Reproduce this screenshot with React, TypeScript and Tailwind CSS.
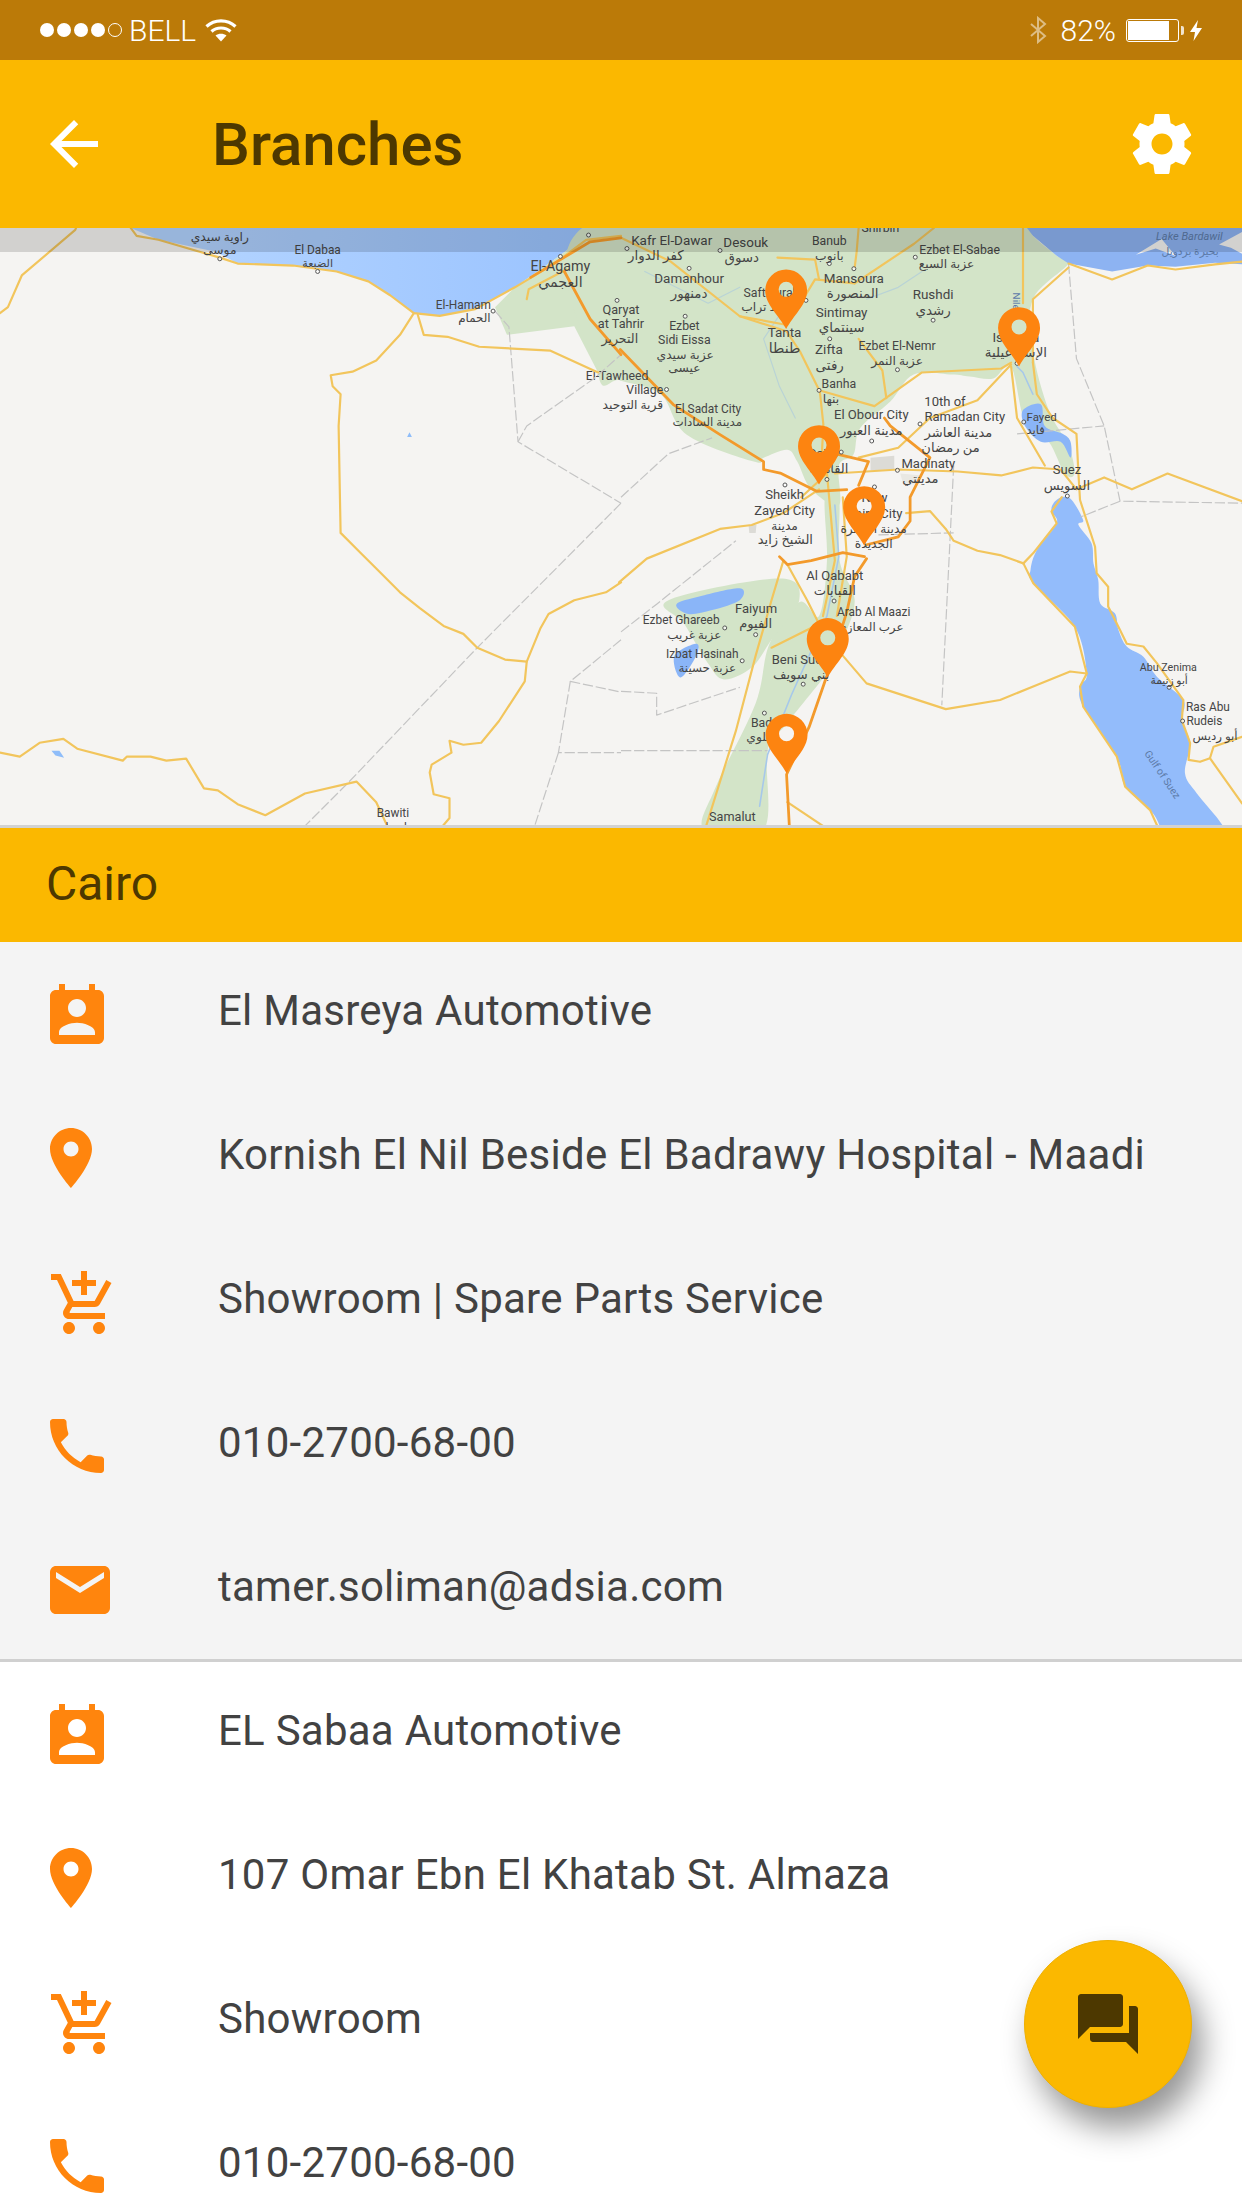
const ORANGE = "#ff850d";

// material icon paths
const calendarPath = "M19 3h-1V1h-2v2H8V1H6v2H5c-1.11 0-2 .9-2 2v14c0 1.1.89 2 2 2h14c1.1 0 2-.9 2-2V5c0-1.1-.9-2-2-2zm-7 3c1.66 0 3 1.34 3 3s-1.34 3-3 3-3-1.34-3-3 1.34-3 3-3zm6 12H6v-1c0-2 4-3.1 6-3.1s6 1.1 6 3.1v1z";
const pinPath = "M12 2C8.13 2 5 5.13 5 9c0 5.25 7 13 7 13s7-7.75 7-13c0-3.87-3.13-7-7-7zm0 9.5c-1.38 0-2.5-1.12-2.5-2.5s1.12-2.5 2.5-2.5 2.5 1.12 2.5 2.5-1.12 2.5-2.5 2.5z";
const cartPath = "M11 9h2V6h3V4h-3V1h-2v3H8v2h3v3zm-4 9c-1.1 0-1.99.9-1.99 2S5.9 22 7 22s2-.9 2-2-.9-2-2-2zm10 0c-1.1 0-1.99.9-1.99 2s.89 2 1.99 2 2-.9 2-2-.9-2-2-2zm-9.83-3.25l.03-.12.9-1.63h7.45c.75 0 1.41-.41 1.75-1.03l3.86-7.01L19.42 4h-.01l-1.1 2-2.76 5H8.53l-.13-.27L6.16 6l-.95-2-.94-2H1v2h2l3.6 7.59-1.35 2.45c-.16.28-.25.61-.25.96 0 1.1.9 2 2 2h12v-2H7.42c-.13 0-.25-.11-.25-.25z";
const phonePath = "M6.62 10.79c1.44 2.83 3.76 5.14 6.59 6.59l2.2-2.2c.27-.27.67-.36 1.02-.24 1.12.37 2.33.57 3.57.57.55 0 1 .45 1 1V20c0 .55-.45 1-1 1-9.39 0-17-7.61-17-17 0-.55.45-1 1-1h3.5c.55 0 1 .45 1 1 0 1.25.2 2.45.57 3.57.11.35.03.74-.25 1.02l-2.2 2.2z";
const mailPath = "M20 4H4c-1.1 0-1.99.9-1.99 2L2 18c0 1.1.9 2 2 2h16c1.1 0 2-.9 2-2V6c0-1.1-.9-2-2-2zm0 4l-8 5-8-5V6l8 5 8-5v2z";
const gearPath = "M19.43 12.98c.04-.32.07-.64.07-.98s-.03-.66-.07-.98l2.11-1.65c.19-.15.24-.42.12-.64l-2-3.46c-.12-.22-.39-.3-.61-.22l-2.49 1c-.52-.4-1.08-.73-1.69-.98l-.38-2.65C14.46 2.18 14.25 2 14 2h-4c-.25 0-.46.18-.49.42l-.38 2.65c-.61.25-1.17.59-1.69.98l-2.49-1c-.23-.09-.49 0-.61.22l-2 3.46c-.13.22-.07.49.12.64l2.11 1.65c-.04.32-.07.65-.07.98s.03.66.07.98l-2.11 1.65c-.19.15-.24.42-.12.64l2 3.46c.12.22.39.3.61.22l2.49-1c.52.4 1.08.73 1.69.98l.38 2.65c.03.24.24.42.49.42h4c.25 0 .46-.18.49-.42l.38-2.65c.61-.25 1.17-.59 1.69-.98l2.49 1c.23.09.49 0 .61-.22l2-3.46c.12-.22.07-.49-.12-.64l-2.11-1.65zM12 15.5c-1.93 0-3.5-1.57-3.5-3.5s1.57-3.5 3.5-3.5 3.5 1.57 3.5 3.5-1.57 3.5-3.5 3.5z";
const forumPath = "M21 6h-2v9H6v2c0 .55.45 1 1 1h11l4 4V7c0-.55-.45-1-1-1zm-4 6V3c0-.55-.45-1-1-1H3c-.55 0-1 .45-1 1v14l4-4h10c.55 0 1-.45 1-1z";
const backPath = "M20 11H7.83l5.59-5.59L12 4l-8 8 8 8 1.41-1.41L7.83 13H20v-2z";

const Icon = ({ d, fill = ORANGE }: { d: string; fill?: string }) => (
  <svg width="72" height="72" viewBox="0 0 24 24" fill={fill} fillRule="evenodd" className="block shrink-0">
    <path d={d} />
  </svg>
);

type Row = { d: string; text: string; box: string };

const rowStyles = {
  calendar: "pl-[41px] pt-[39px]",
  pin: "pl-[35px] pt-[36px]",
  cart: "pl-[48px] pt-[38px]",
  phone: "pl-[41px] pt-[36px]",
  mail: "pl-[44px] pt-[36px]",
};

const firstBranch: Row[] = [
  { d: calendarPath, box: rowStyles.calendar, text: "El Masreya Automotive" },
  { d: pinPath, box: rowStyles.pin, text: "Kornish El Nil Beside El Badrawy Hospital - Maadi" },
  { d: cartPath, box: rowStyles.cart, text: "Showroom | Spare Parts Service" },
  { d: phonePath, box: rowStyles.phone, text: "010-2700-68-00" },
  { d: mailPath, box: rowStyles.mail, text: "tamer.soliman@adsia.com" },
];

const secondBranch: Row[] = [
  { d: calendarPath, box: rowStyles.calendar, text: "EL Sabaa Automotive" },
  { d: pinPath, box: rowStyles.pin, text: "107 Omar Ebn El Khatab St. Almaza" },
  { d: cartPath, box: rowStyles.cart, text: "Showroom" },
  { d: phonePath, box: rowStyles.phone, text: "010-2700-68-00" },
];

const BranchRow = ({ d, text, box }: Row) => (
  <div className="flex h-[144px]">
    <div className={`w-[218px] shrink-0 ${box}`}>
      <Icon d={d} />
    </div>
    <div className="pt-[41px] text-[42px] tracking-[0.25px] leading-[56px] text-[#424242] whitespace-nowrap">{text}</div>
  </div>
);

// closed catmull-rom through the points, so coasts don't look cut with a ruler
const smooth = (pts: string) => {
  const p = pts.split(" ").map((s) => s.split(",").map(Number));
  const n = p.length;
  let d = `M${p[0][0]} ${p[0][1]}`;
  for (let i = 0; i < n; i++) {
    const [a, b, c, e] = [p[(i - 1 + n) % n], p[i], p[(i + 1) % n], p[(i + 2) % n]];
    const c1 = [b[0] + (c[0] - a[0]) / 6, b[1] + (c[1] - a[1]) / 6];
    const c2 = [c[0] - (e[0] - b[0]) / 6, c[1] - (e[1] - b[1]) / 6];
    d += ` C${c1[0]} ${c1[1]} ${c2[0]} ${c2[1]} ${c[0]} ${c[1]}`;
  }
  return d + " Z";
};

// map coordinates below are in zoomed units: 1 unit = 0.396px
const goldLeft = [
  "0,235 20,220 55,140 190,25 200,0",
  "330,20 345,40 400,50 555,95 600,110 740,115 850,130 930,155 985,190 1045,235 1110,242 1200,225 1300,170 1400,110 1480,50 1568,40",
  "1045,235 1010,290 950,355 890,383 835,392 840,420 860,440 855,520 860,790 910,840 950,880 1010,940 1060,980 1120,1025 1170,1045 1205,1080 1275,1110 1330,1115 1365,1030 1385,995 1450,960 1530,940 1568,915",
  "1055,240 1070,290 1130,295 1210,320 1390,330 1510,385",
  "1330,1115 1325,1165 1260,1265 1215,1320 1170,1325 1135,1315 1140,1345 1090,1375 1085,1395 1095,1450 1135,1460 1135,1510 1118,1530",
  "0,1345 50,1355 100,1320 160,1310 195,1335 310,1365 320,1355 380,1355 420,1365 470,1360 515,1435 550,1440 600,1475 670,1503 770,1448 900,1418 950,1470 980,1535",
  "1330,200 1335,175 1430,125",
];

const dashLeft = [
  "1250,230 1285,270 1308,560 1568,715",
  "1308,560 1330,520 1500,400 1568,340",
  "1568,715 1205,1080 880,1420 770,1530",
  "1568,1060 1440,1165 1568,1192",
  "1440,1165 1410,1345 1568,1345",
  "1410,1345 1350,1530",
];

const goldRight = [
  "0,45 124,104 300,243 418,281 452,332 502,433 511,517 505,630",
  "300,243 420,265 490,150 590,160",
  "395,95 490,100 500,150",
  "600,20 595,80 590,120",
  "590,160 740,60 790,20",
  "1015,20 1015,210",
  "500,430 640,470 760,385 960,375 985,360",
  "985,370 1000,500 1070,620",
  "600,600 700,575 780,500 900,455 985,365",
  "540,640 700,630 850,635 960,645 1040,625 1110,630 1150,680 1220,650 1290,680 1380,640 1568,710",
  "1040,360 1050,440 1090,500 1150,540 1155,640 1159,707 1197,825 1201,892 1230,926 1230,976 1260,1035 1277,1070 1319,1077 1353,1119 1420,1212 1416,1263 1437,1321 1433,1363 1462,1368 1487,1359 1496,1330 1568,1305",
  "1487,1359 1568,1473",
  "1130,120 1040,200 1040,360",
  "720,740 780,735 820,780 840,810 900,835 957,846 1016,867",
  "1016,867 1041,841 1100,766 1087,736 1113,700",
  "1016,867 1041,917 1146,1027 1176,1145 1159,1178 1167,1229 1252,1355 1273,1431 1336,1490 1355,1532",
  "560,1100 620,1170 820,1235 957,1212 1050,1174 1134,1140 1176,1145",
  "-5,915 65,855 250,780 330,770 410,740 500,680",
  "410,860 380,960 340,1100 290,1290 215,1530",
  "420,870 470,960 500,1020 380,1080",
  "420,1470 510,1530",
  "1130,110 1240,150 1330,115 1400,125 1500,112 1568,105",
  "600,300 660,380 670,450",
  "455,700 520,640 540,860 510,1000",
  "560,700 570,850 545,1000",
];

const dashRight = [
  "0,700 120,590 230,550",
  "0,1040 90,970 290,810",
  "1130,110 1150,350 1220,520 1260,710 1568,715",
  "1260,710 1160,750",
  "840,620 810,1225",
  "650,795 840,790",
  "0,1190 90,1195 90,1250 300,1180",
  "0,1340 370,1340",
  "1000,540 1220,520",
];

const orangeRoads = [
  "-2,327 132,466 250,542 360,610 360,630 402,639 494,685 570,681",
  "540,590 625,610 600,670",
  "665,500 680,520 780,600 730,700 730,760 700,800 620,820",
  "615,850 560,840 480,860 420,870 400,850",
  "620,855 590,900 570,990 520,1150 475,1280 418,1400 425,1530",
];

type Label = [number, number, string, number?];

const labelsLeft: Label[] = [
  [555, 53, "راوية سيدي", 31],
  [555, 87, "موسى", 31],
  [802, 86, "El Dabaa", 30],
  [802, 118, "الضبعة", 28],
  [1170, 225, "El-Hamam", 30],
  [1198, 258, "الحمام", 30],
  [1415, 130, "El-Agamy", 36],
  [1415, 168, "العجمي", 36],
  [1568, 238, "Qaryat", 32],
  [1568, 273, "at Tahrir", 32],
  [1565, 310, "التحرير", 32],
  [992, 1507, "Bawiti", 30],
  [992, 1542, "باويطي", 30],
];

const labelsRight: Label[] = [
  [128, 63, "Kafr El-Dawar", 34],
  [88, 102, "كفر الدوار", 34],
  [315, 68, "Desouk", 34],
  [305, 107, "دسوق", 34],
  [526, 63, "Banub"],
  [526, 100, "بانوب"],
  [655, 30, "Shirbin"],
  [855, 85, "Ezbet El-Sabae"],
  [822, 122, "عزبة السبع"],
  [172, 160, "Damanhour", 34],
  [172, 198, "دمنهور", 34],
  [380, 195, "Saft Turab"],
  [375, 230, "صفط تراب"],
  [588, 160, "Mansoura", 34],
  [585, 197, "المنصورة", 34],
  [788, 200, "Rushdi", 34],
  [788, 240, "رشدي", 34],
  [557, 245, "Sintimay", 34],
  [557, 284, "سينتماي", 34],
  [160, 278, "Ezbet"],
  [160, 313, "Sidi Eissa"],
  [162, 350, "عزبة سيدي"],
  [160, 385, "عيسى"],
  [413, 296, "Tanta", 34],
  [413, 335, "طنطا", 36],
  [525, 338, "Zifta", 34],
  [527, 380, "رفتى", 34],
  [697, 329, "Ezbet El-Nemr", 31],
  [697, 365, "عزبة النمر", 31],
  [997, 308, "Ismailia", 34],
  [997, 347, "الإسماعيلية", 34],
  [-10, 405, "El-Tawheed", 31],
  [60, 440, "Village", 31],
  [30, 476, "قرية التوحيد", 31],
  [550, 425, "Banha", 31],
  [530, 462, "بنها", 31],
  [220, 487, "El Sadat City", 30],
  [218, 520, "مدينة السادات", 30],
  [632, 503, "El Obour City", 33],
  [632, 542, "مدينة العبور", 33],
  [818, 470, "10th of", 33],
  [868, 508, "Ramadan City", 33],
  [852, 547, "مدينة العاشر", 33],
  [832, 585, "من رمضان", 33],
  [1062, 507, "Fayed", 29],
  [1047, 540, "فايد", 29],
  [776, 625, "Madinaty", 33],
  [756, 664, "مدينتي", 33],
  [510, 600, "Cairo", 33],
  [525, 638, "القاهرة", 33],
  [1126, 642, "Suez", 33],
  [1126, 682, "السويس", 33],
  [413, 705, "Sheikh", 33],
  [413, 744, "Zayed City", 33],
  [413, 782, "مدينة", 31],
  [415, 819, "الشيخ زايد", 33],
  [640, 712, "New", 33],
  [640, 752, "Cairo City", 33],
  [638, 790, "مدينة القاهرة", 31],
  [638, 828, "الجديدة", 31],
  [540, 910, "Al Qababt", 33],
  [540, 948, "القبابات", 33],
  [638, 1001, "Arab Al Maazi", 30],
  [630, 1037, "عرب المعازي", 30],
  [341, 992, "Faiyum", 33],
  [340, 1030, "الفيوم", 33],
  [152, 1021, "Ezbet Ghareeb", 30],
  [185, 1058, "عزبة غريب", 30],
  [205, 1105, "Izbat Hasinah", 30],
  [218, 1142, "عزبة حسينة", 30],
  [450, 1120, "Beni Suef", 33],
  [455, 1160, "بني سويف", 33],
  [1382, 1138, "Abu Zenima", 27],
  [1384, 1172, "أبو زنيمة", 27],
  [1482, 1240, "Ras Abu", 30],
  [1473, 1275, "Rudeis", 30],
  [1500, 1313, "أبو رديس", 30],
  [360, 1280, "Badr", 31],
  [350, 1315, "ملوي", 31],
  [281, 1518, "Samalut", 32],
];

const cityDots = [
  [15, 72], [250, 77], [172, 122], [162, 243], [526, 110], [588, 123], [743, 94], [788, 253], [467, 203], [527, 300],
  [115, 428], [500, 430], [633, 558], [755, 515], [1017, 510], [698, 632], [556, 586], [520, 655], [640, 674], [414, 669],
  [1127, 697], [538, 962], [262, 1030], [340, 1047], [306, 1113], [460, 1172], [362, 1245], [1384, 1180], [1418, 1265], [698, 378], [1000, 362],
];

const leftDots = [
  [555, 98], [802, 130], [1245, 230], [1415, 92], [1558, 203], [1486, 38],
];

const pinTips = [
  [417, 275],
  [1005, 370],
  [500, 668],
  [614, 822],
  [522, 1155],
  [418, 1397],
];

const deltaEdge = "-60,0 1010,0 1040,40 1100,90 1130,110 1040,200 1040,330 1080,480 1130,570 1145,640 1120,640 1080,560 1020,510 985,370 940,400 880,395 835,390 739,390 680,458 604,525 587,592 550,620 550,720 480,680 445,610 420,580 360,600 335,610 166,542 100,440 -2,405 -58,385";
const valleyEdge = "515,700 550,700 552,860 590,960 560,1060 530,1130 420,1270 370,1340 360,1540 210,1540 240,1430 340,1220 375,1070 450,965 500,1000 520,860";
const faiyumEdge = "120,960 400,905 450,960 380,1060 330,1130 260,1160 220,1120 160,1020";
const redSeaEdge = "1092,715 1113,700 1138,707 1167,758 1155,770 1188,816 1193,867 1205,909 1210,968 1247,993 1256,1035 1277,1077 1319,1103 1353,1153 1420,1212 1416,1263 1437,1321 1424,1397 1454,1448 1521,1532 1540,1600 1380,1600 1361,1532 1336,1490 1273,1431 1252,1355 1167,1229 1159,1178 1176,1145 1146,1027 1041,917 1034,884 1050,833 1100,766 1087,736";

const MapLabels = ({ items }: { items: Label[] }) => (
  <g fill="#454545" textAnchor="middle">
    {items.map(([x, y, t, size]) => (
      <text key={`${x}-${y}`} x={x} y={y} fontSize={size ?? 31}>
        {t}
      </text>
    ))}
  </g>
);

const Lines = ({ items, color, w, dash }: { items: string[]; color: string; w: number; dash?: string }) => (
  <g fill="none" stroke={color} strokeWidth={w} strokeLinejoin="round" strokeLinecap={dash ? "butt" : "round"} strokeDasharray={dash}>
    {items.map((p) => (
      <polyline key={p} points={p} />
    ))}
  </g>
);

const Dots = ({ items }: { items: number[][] }) => (
  <g fill="#fff" fillOpacity="0.7" stroke="#555" strokeWidth="2.5">
    {items.map(([x, y]) => (
      <circle key={`${x}-${y}`} cx={x} cy={y} r="5" />
    ))}
  </g>
);

const BranchMap = () => (
  <div className="h-[600px] border-b-[3px] border-[#d2d2d2] overflow-hidden">
    <svg width="1242" height="597" viewBox="0 228 1242 597" className="block bg-[#f5f4f2]">
      <defs>
        <linearGradient id="sea" gradientUnits="userSpaceOnUse" x1="500" y1="0" x2="1500" y2="0">
          <stop offset="0" stopColor="#b2d3ff" />
          <stop offset="1" stopColor="#9ac3ff" />
        </linearGradient>
      </defs>
      <g transform="translate(0 220) scale(0.39605)">
        {/* left half */}
        <polygon fill="url(#sea)" points="330,0 330,20 400,50 545,80 600,110 740,115 850,130 930,155 985,190 1045,235 1110,242 1200,225 1300,170 1400,100 1480,40 1520,0" />
        <polygon fill="#d3e4c8" points="1250,220 1280,290 1450,268 1510,385 1568,405 1568,0 1520,0 1480,40 1400,100 1300,170" />
        <polygon fill="#8fbdf9" points="130,1340 150,1340 162,1358 140,1352" />
        <polygon fill="#8fbdf9" points="1028,548 1034,536 1040,548" />

        {/* right half */}
        <g transform="translate(1568 0)">
          <path fill="#d3e4c8" d={smooth(deltaEdge)} />
          <path fill="#d3e4c8" d={smooth(valleyEdge)} />
          <path fill="#d3e4c8" d={smooth(faiyumEdge)} />
          <polygon fill="#dcdbd6" points="630,600 690,595 690,630 630,632" />
          <polygon fill="#dcdbd6" points="322,770 342,770 340,790 324,790" />
          <polygon fill="#e9e8e3" points="705,640 760,645 740,668 712,665" />
          <polygon fill="#8db3f2" points="1010,0 1040,40 1100,90 1130,110 1240,130 1330,115 1400,118 1500,108 1568,112 1568,0" />
          <polygon fill="#f5f4f2" points="1300,88 1365,48 1400,90 1350,72" />
          <polygon fill="#f5f4f2" points="1510,62 1568,30 1568,85 1540,70" />
          <path fill="#93bcfb" d={smooth(redSeaEdge)} />
          <path fill="#8ab5f8" d={smooth("140,970 200,950 300,930 300,960 230,985 170,995")} />
          <path fill="#8ab5f8" d={smooth("1015,480 1060,465 1070,520 1115,540 1135,560 1135,600 1110,560 1060,560 1020,520")} />
          <path fill="#8ab5f8" d={smooth("135,1100 190,1070 190,1100 150,1155")} />
          <Lines items={["540,720 550,850 520,1000 430,1200 370,1350 350,1480", "1000,370 1015,385 1040,440"]} color="#a6c8ea" w={4} />
          <Lines items={["400,240 360,300 400,420 440,500", "60,130 220,210 300,170", "620,200 700,170 760,130"]} color="#b9d3d6" w={3} />
          <Lines items={dashRight} color="#c4c4c4" w={3} dash="26 7" />
          <Lines items={goldRight} color="#f2c55c" w={5.5} />
          <Lines items={orangeRoads} color="#f39a2b" w={7} />
          <Dots items={cityDots} />
          <MapLabels items={labelsRight} />
          <text x="1435" y="50" fontSize="28" fontStyle="italic" fill="#5d7ba8" textAnchor="middle">Lake Bardawil</text>
          <text x="1437" y="88" fontSize="27" fill="#5d7ba8" textAnchor="middle">بحيرة بردويل</text>
          <text x="1360" y="1405" fontSize="26" fill="#5d7ba8" textAnchor="middle" transform="rotate(56 1360 1405)">Gulf of Suez</text>
          <text x="990" y="205" fontSize="25" fill="#5d7ba8" textAnchor="middle" transform="rotate(90 990 205)">Nile</text>
        </g>

        {/* left roads and names go over the delta's fill */}
        <Lines items={dashLeft} color="#c4c4c4" w={3} dash="26 7" />
        <Lines items={goldLeft} color="#f2c55c" w={5.5} />
        <Lines items={["1340,145 1490,55 1568,45", "1425,130 1490,250 1568,340"]} color="#f39a2b" w={7} />
        <Dots items={leftDots} />
        <MapLabels items={labelsLeft} />

        <g transform="translate(1568 0)">
          {pinTips.map(([x, y]) => (
            <path
              key={`${x}-${y}`}
              transform={`translate(${x} ${y})`}
              fill="#fd8410"
              fillRule="evenodd"
              d="M0 0 C-18 -34 -53 -62 -53 -97 A53 53 0 1 1 53 -97 C53 -62 18 -34 0 0 Z M0 -119 A19 19 0 1 0 0 -81 A19 19 0 1 0 0 -119 Z"
            />
          ))}
        </g>
      </g>
      <rect x="0" y="228" width="1242" height="24" fill="#000" fillOpacity="0.14" />
    </svg>
  </div>
);

const StatusBar = () => (
  <div className="h-[60px] bg-[#bb7a08] flex items-center justify-between text-white text-[30px] font-light">
    <div className="flex items-center pl-[40px]">
      <div className="flex gap-[3px]">
        <span className="w-[14px] h-[14px] rounded-full bg-white" />
        <span className="w-[14px] h-[14px] rounded-full bg-white" />
        <span className="w-[14px] h-[14px] rounded-full bg-white" />
        <span className="w-[14px] h-[14px] rounded-full bg-white" />
        <span className="w-[14px] h-[14px] rounded-full border border-white" />
      </div>
      <span className="ml-[7px]">BELL</span>
      <svg width="32" height="24" viewBox="0 0 32 24" fill="none" stroke="#fff" strokeWidth="3.2" className="ml-[9px]">
        <path d="M1.5 8.5C9.5 1 22.5 1 30.5 8.5" />
        <path d="M6.5 13.5C11.5 8.8 20.5 8.8 25.5 13.5" />
        <path d="M16 23.5L10.5 17.5C13.5 15 18.5 15 21.5 17.5Z" fill="#fff" stroke="none" />
      </svg>
    </div>
    <div className="flex items-center pr-[40px]">
      <svg width="18" height="28" viewBox="0 0 18 28" fill="none" stroke="#fff" strokeWidth="2" strokeOpacity="0.5">
        <path d="M2 8L16 20L9 26V2L16 8L2 20" />
      </svg>
      <span className="ml-[14px]">82%</span>
      <div className="ml-[10px] w-[53px] h-[23px] border border-white rounded-[3px] p-[1px]">
        <div className="w-[41px] h-full bg-white" />
      </div>
      <div className="ml-[2px] w-[3px] h-[9px] bg-white/80 rounded-r-[2px]" />
      <svg width="12" height="21" viewBox="0 0 12 21" fill="#fff" className="ml-[6px]">
        <path d="M8 0L0 12H5L3.5 21L12 8H6.5Z" />
      </svg>
    </div>
  </div>
);

export default function App() {
  return (
    <div className="relative w-[1242px] h-[2208px] overflow-hidden bg-white [font-family:Roboto,'DejaVu_Sans',sans-serif]">
      <StatusBar />
      <div className="h-[168px] bg-[#fbb800] flex items-center">
        <div className="ml-[38px]">
          <Icon d={backPath} fill="#fff" />
        </div>
        <div className="ml-[102px] mt-[2px] text-[60px] font-medium text-[#4d3800]">Branches</div>
        <div className="ml-auto mr-[44px]">
          <Icon d={gearPath} fill="#fff" />
        </div>
      </div>
      <BranchMap />
      <div className="h-[114px] bg-[#fbb800] flex items-center pl-[46px] pb-[2px] text-[48px] text-[#4d3800]">Cairo</div>
      <div className="bg-[#f4f4f4] border-b-[3px] border-[#d0d0d0] h-[720px]">
        {firstBranch.map((r) => (
          <BranchRow key={r.text} {...r} />
        ))}
      </div>
      <div>
        {secondBranch.map((r) => (
          <BranchRow key={r.text} {...r} />
        ))}
      </div>
      <div className="absolute left-[1024px] top-[1940px] w-[168px] h-[168px] rounded-full bg-[#fbb800] border border-[#efb000] flex items-center justify-center shadow-[10px_20px_32px_rgba(0,0,0,0.42)]">
        <Icon d={forumPath} fill="#4d3800" />
      </div>
    </div>
  );
}
